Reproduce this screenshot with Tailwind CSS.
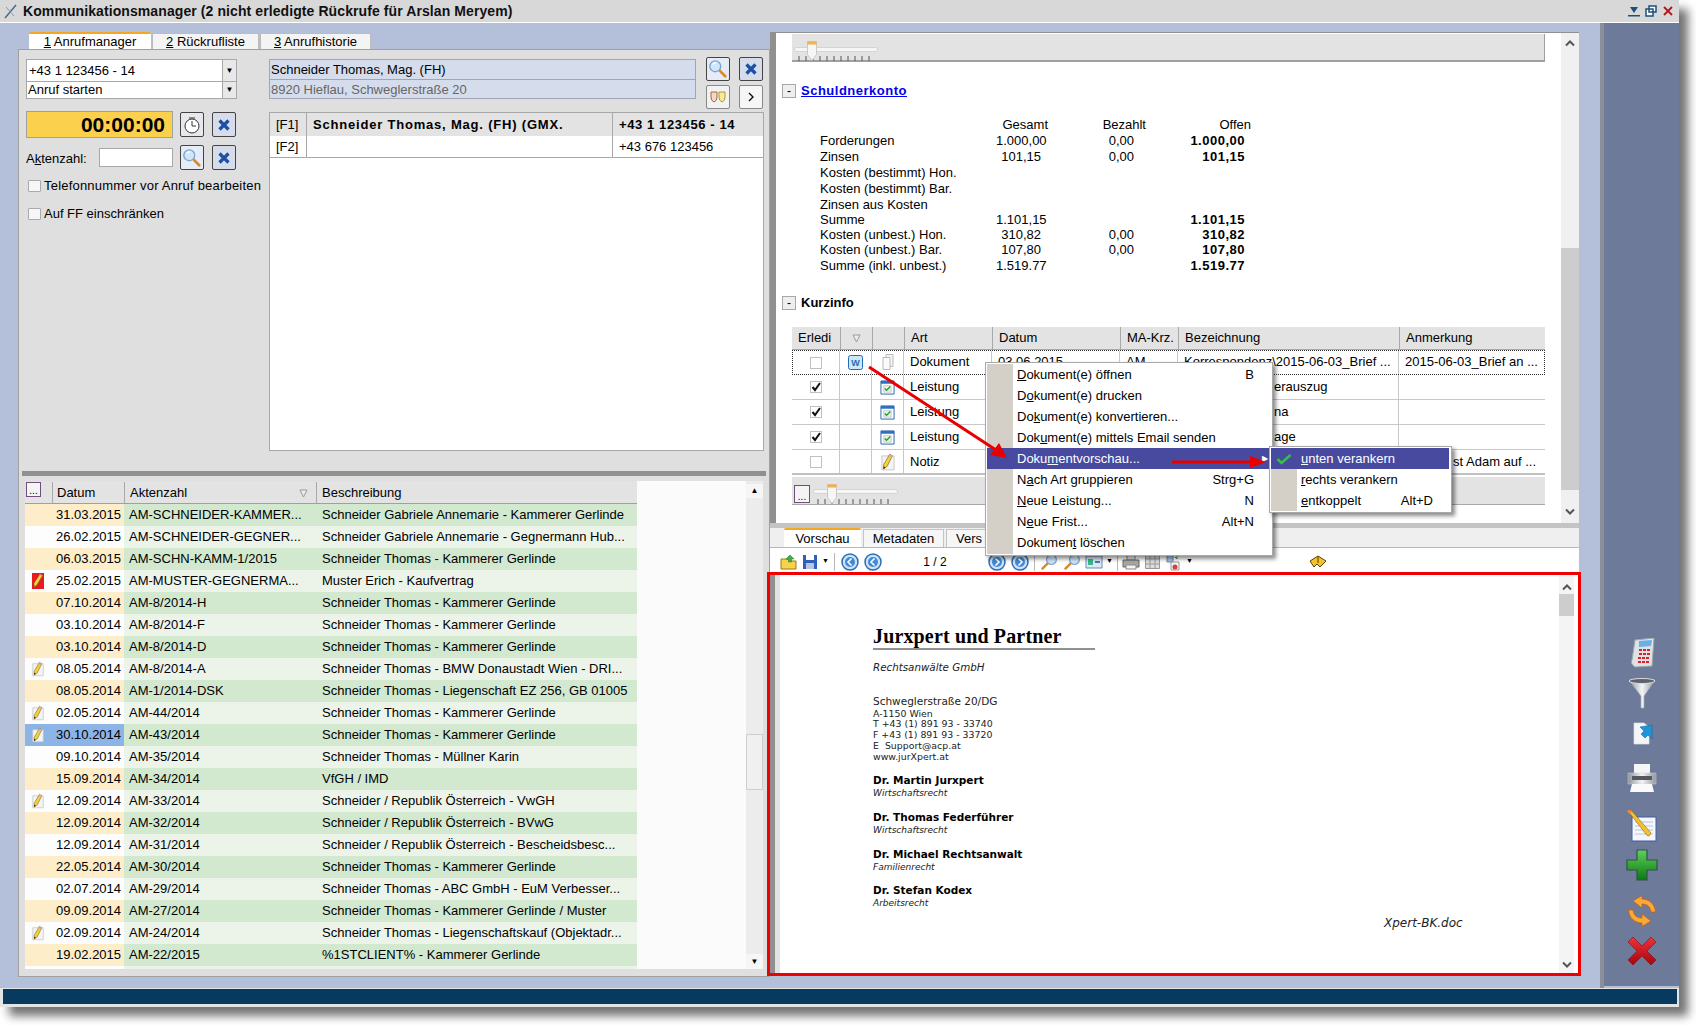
<!doctype html>
<html lang="de">
  <head>
    <meta charset="UTF-8" />
    <title>Kommunikationsmanager</title>
    <script src="https://cdn.jsdelivr.net/npm/@tailwindcss/browser@4"></script>
  </head>
  <body class="h-[1025px] bg-white overflow-hidden font-['Liberation_Sans',sans-serif] text-[13px] text-black select-none">
    <svg class="absolute h-0 w-0">
      <defs>
        <linearGradient id="gGreen" x1="0" y1="0" x2="0" y2="1"><stop offset="0" stop-color="#5fd05a" /><stop offset="1" stop-color="#0a7a12" /></linearGradient>
        <linearGradient id="gRed" x1="0" y1="0" x2="0" y2="1"><stop offset="0" stop-color="#f0323a" /><stop offset="1" stop-color="#a80410" /></linearGradient>
        <linearGradient id="gSilver" x1="0" y1="0" x2="1" y2="0"><stop offset="0" stop-color="#8d939c" /><stop offset=".5" stop-color="#f4f5f6" /><stop offset="1" stop-color="#9097a0" /></linearGradient>
        <symbol id="pencil" viewBox="0 0 16 20">
          <path d="M1 3h14v16H1z" fill="#f4f4f4" stroke="#c4c4c4" />
          <path d="M10 1l3 2-6 12-4 3 0-5z" fill="#f5d33c" stroke="#6b5a10" stroke-width=".7" />
          <path d="M10 1l3 2-1 2-3-2z" fill="#f29ab0" />
          <path d="M3 18l0-3 2 1z" fill="#111" />
        </symbol>
        <symbol id="lens" viewBox="0 0 22 22">
          <path d="M12 12l7 7" stroke="#d9892a" stroke-width="3" stroke-linecap="round" />
          <circle cx="8" cy="8" r="6" fill="#cfe6fb" stroke="#7ea6cf" stroke-width="1.5" />
          <path d="M5 6q2-2 4-1.500" stroke="#fff" stroke-width="1.500" fill="none" />
        </symbol>
        <symbol id="xblue" viewBox="0 0 14 14">
          <path d="M2.500 2.500l9 9M11.500 2.500l-9 9" stroke="#1b4fa8" stroke-width="3.200" />
        </symbol>
        <symbol id="task" viewBox="0 0 16 16">
          <path d="M1 1h14v14H1z" fill="#fff" stroke="#2a5fa8" />
          <path d="M1 1h14v3H1z" fill="#2f6fc0" />
          <path d="M4 6h8v7H4z" fill="#e6f3e2" stroke="#9ab" stroke-width=".5" />
          <path d="M5 9l2 2 4-4" fill="none" stroke="#22a028" stroke-width="1.400" />
        </symbol>
        <symbol id="round" viewBox="0 0 18 18">
          <circle cx="9" cy="9" r="8" fill="#cfe2f6" stroke="#2c6db5" stroke-width="1.500" />
          <circle cx="9" cy="9" r="5" fill="#3f8bd8" />
          <path d="M10.500 5.500L7 9l3.500 3.500" fill="none" stroke="#fff" stroke-width="1.600" />
        </symbol>
        <symbol id="roundnext" viewBox="0 0 18 18">
          <circle cx="9" cy="9" r="8" fill="#cfe2f6" stroke="#2c6db5" stroke-width="1.500" />
          <circle cx="9" cy="9" r="5" fill="#3f8bd8" />
          <path d="M7.500 5.500L11 9l-3.500 3.500" fill="none" stroke="#fff" stroke-width="1.600" />
        </symbol>
        <symbol id="ticks" viewBox="0 0 85 5">
          <path d="M5 0v5M12 0v5M19 0v5M26 0v5M33 0v5M40 0v5M47 0v5M54 0v5M61 0v5M68 0v5M75 0v5" stroke="#555" />
        </symbol>
      </defs>
    </svg>

    <div class="relative flex h-[1007px] w-[1679px] flex-col bg-[#e4e4e4] shadow-[9px_9px_9px_rgba(0,0,0,0.55)]">
      <!-- Titelleiste -->
      <div class="flex h-[23px] shrink-0 items-center border-b border-white bg-[#d8d8d8]">
        <svg class="mx-[3px] h-[16px] w-[16px]" viewBox="0 0 16 16"><path d="M2 15L13 2" stroke="#4a6a90" stroke-width="1.500" /><path d="M3 4l8 9" stroke="#8a9ab0" /></svg>
        <span class="ml-[1px] text-[14px] leading-none font-bold tracking-[0.09px] text-[#111]">Kommunikationsmanager (2 nicht erledigte Rückrufe für Arslan Meryem)</span>
        <div class="ml-auto mr-[5px] flex items-center gap-[5px]">
          <svg class="h-[12px] w-[12px]" viewBox="0 0 12 12"><path d="M2 2h8L6 8z" fill="#1c4f7c" /><path d="M0 10h12v1.500H0z" fill="#1c4f7c" /></svg>
          <svg class="h-[12px] w-[12px]" viewBox="0 0 12 12"><path d="M4 1h7v6H4zM1 4h7v7H1z" fill="#fff" stroke="#1c4f7c" stroke-width="1.500" /></svg>
          <svg class="h-[12px] w-[12px]" viewBox="0 0 12 12"><path d="M2 2l8 8M10 2l-8 8" stroke="#b01818" stroke-width="1.800" /></svg>
        </div>
      </div>

      <!-- Hauptbereich -->
      <div class="flex h-[965px] shrink-0 bg-[#b4c0da] pl-[18px]">
        <!-- linke Seite -->
        <div class="flex w-[752px] shrink-0 flex-col pt-[9px] pb-[11px]">
          <div class="flex h-[17px] shrink-0 items-end pl-[11px] leading-[16px]">
            <div class="h-[17px] w-[122px] rounded-t-[2px] border-t-2 border-[#f5a623] bg-white text-center"><u>1</u> Anrufmanager</div>
            <div class="ml-[1px] h-[16px] w-[107px] rounded-t-[2px] border border-b-0 border-[#bcbcbc] bg-[#f4f4f4] text-center"><u>2</u> Rückrufliste</div>
            <div class="ml-[1px] h-[16px] w-[111px] rounded-t-[2px] border border-b-0 border-[#bcbcbc] bg-[#f4f4f4] text-center"><u>3</u> Anrufhistorie</div>
          </div>
          <div class="flex min-h-0 flex-1 flex-col border border-[#a0a0a0] bg-[#dfdfdf]">
            <!-- oben -->
            <div class="flex h-[421px] shrink-0">
              <div class="w-[250px] shrink-0 pl-[7px] pt-[9px]">
                <div class="w-[211px] border border-[#a8a8a8] bg-white">
                  <div class="flex h-[22px] items-center border-b border-[#a8a8a8] pl-[2px]">+43 1 123456 - 14<span class="ml-auto flex h-full w-[14px] items-center justify-center border-l border-[#a8a8a8] bg-[#e8e8e8] text-[8px]">▼</span></div>
                  <div class="flex h-[16px] items-center pl-[1px]">Anruf starten<span class="ml-auto flex h-full w-[14px] items-center justify-center border-l border-[#a8a8a8] bg-[#e8e8e8] text-[8px]">▼</span></div>
                </div>
                <div class="mt-[12px] flex items-center">
                  <div class="flex h-[27px] w-[147px] items-center justify-end border border-[#a0a0a0] bg-[#fbd04c] pr-[7px] text-[21px] font-bold">00:00:00</div>
                  <div class="ml-[7px] flex h-[25px] w-[24px] items-center justify-center rounded-[2px] border border-[#444] bg-[#e6e8ee]">
                    <svg class="h-[18px] w-[18px]" viewBox="0 0 18 18"><circle cx="9" cy="10" r="7" fill="#fff" stroke="#333" /><path d="M9 5v5l4 0" stroke="#333" fill="none" /><path d="M6 2h6" stroke="#333" /></svg>
                  </div>
                  <div class="ml-[8px] flex h-[25px] w-[24px] items-center justify-center rounded-[2px] border border-[#444] bg-[#d6dcea]"><svg class="h-[14px] w-[14px]"><use href="#xblue" /></svg></div>
                </div>
                <div class="mt-[7px] flex items-center">
                  <span class="w-[73px] pt-[2px]">A<u>k</u>tenzahl:</span>
                  <div class="h-[19px] w-[74px] border border-[#a8a8a8] bg-white"></div>
                  <div class="ml-[7px] flex h-[25px] w-[24px] items-center justify-center rounded-[2px] border border-[#444] bg-[#e6ecf6]"><svg class="h-[20px] w-[20px]"><use href="#lens" /></svg></div>
                  <div class="ml-[8px] flex h-[25px] w-[24px] items-center justify-center rounded-[2px] border border-[#444] bg-[#d6dcea]"><svg class="h-[14px] w-[14px]"><use href="#xblue" /></svg></div>
                </div>
                <div class="mt-[9px] flex h-[14px] items-center pl-[2px] tracking-[0.2px] whitespace-nowrap"><span class="mr-[3px] h-[12px] w-[13px] rounded-[1px] border border-[#aaa] bg-[#f6f6f6]"></span>Telefonnummer vor Anruf bearbeiten</div>
                <div class="mt-[14px] flex h-[14px] items-center pl-[2px]"><span class="mr-[3px] h-[12px] w-[13px] rounded-[1px] border border-[#aaa] bg-[#f6f6f6]"></span>Auf FF einschränken</div>
              </div>
              <div class="w-[495px] shrink-0 pt-[6px]">
                <div class="flex h-[53px]">
                  <div class="mt-[3px] h-[40px] w-[427px] border border-[#a0a6b8] bg-[#d5dded]">
                    <div class="h-[20px] border-b border-[#a0a6b8] pl-[1px] leading-[19px]">Schneider Thomas, Mag. (FH)</div>
                    <div class="pl-[1px] leading-[19px] text-[#666]">8920 Hieflau, Schweglerstraße 20</div>
                  </div>
                  <div class="ml-[10px] flex w-[57px] flex-wrap content-start gap-x-[9px] gap-y-[4px] pt-[1px]">
                    <div class="flex h-[24px] w-[24px] items-center justify-center rounded-[2px] border border-[#444] bg-[#e6ecf6]"><svg class="h-[20px] w-[20px]"><use href="#lens" /></svg></div>
                    <div class="flex h-[24px] w-[24px] items-center justify-center rounded-[2px] border border-[#444] bg-[#d6dcea]"><svg class="h-[14px] w-[14px]"><use href="#xblue" /></svg></div>
                    <div class="flex h-[24px] w-[24px] items-center justify-center rounded-[2px] border border-[#888] bg-[#f2f2f2]">
                      <svg class="h-[14px] w-[16px]" viewBox="0 0 16 14"><path d="M1 2h6v5q0 4-3 5-3-1-3-5z" fill="#f4d9c0" stroke="#a8644a" /><path d="M9 2h6v5q0 4-3 5-3-1-3-5z" fill="#f6e9a0" stroke="#b09a30" /></svg>
                    </div>
                    <div class="flex h-[24px] w-[24px] items-center justify-center rounded-[2px] border border-[#888] bg-[#f6f6f6]">
                      <svg class="h-[10px] w-[8px]" viewBox="0 0 8 10"><path d="M2 1l4 4-4 4" fill="none" stroke="#111" stroke-width="1.400" /></svg>
                    </div>
                  </div>
                </div>
                <div class="mt-[3px] h-[339px] w-[495px] border border-[#a8a8a8] bg-white">
                  <div class="flex h-[23px] items-center bg-[#e3e3e3] font-bold">
                    <div class="h-full w-[37px] border-r border-[#a8a8a8] pl-[6px] leading-[23px] font-normal">[F1]</div>
                    <div class="w-[306px] overflow-hidden border-r border-[#a8a8a8] pl-[6px] leading-[23px] tracking-[0.8px] whitespace-nowrap">Schneider Thomas, Mag. (FH) (GMX.</div>
                    <div class="pl-[6px] leading-[23px] tracking-[0.6px]">+43 1 123456 - 14</div>
                  </div>
                  <div class="flex h-[22px] items-center border-b border-[#a8a8a8]">
                    <div class="h-full w-[37px] border-r border-[#a8a8a8] pl-[6px] leading-[21px]">[F2]</div>
                    <div class="h-full w-[306px] border-r border-[#a8a8a8]"></div>
                    <div class="pl-[6px] leading-[21px]">+43 676 123456</div>
                  </div>
                </div>
              </div>
            </div>

            <!-- Splitter -->
            <div class="mx-[3px] h-[5px] shrink-0 bg-[#909090]"></div>

            <!-- Liste -->
            <div class="flex min-h-0 flex-1 pt-[5px] pl-[6px] pb-[7px]">
              <div class="w-[721px] shrink-0 overflow-hidden bg-[#fbfbfb] leading-[22px] whitespace-nowrap">
                <div class="flex h-[23px] w-[612px] border-b border-[#a0a0a0] bg-[#e3e3e3] pt-[1px]">
                  <div class="flex w-[27px] items-start pl-[1px]"><span class="flex h-[15px] w-[15px] items-end justify-center border border-[#70507a] bg-[#f4f4f4] text-[10px] leading-[10px]">...</span></div>
                  <div class="w-[72px] border-l border-[#a8a8a8] pl-[4px]">Datum</div>
                  <div class="flex w-[192px] border-l border-[#a8a8a8] pl-[5px]">Aktenzahl<svg class="mt-[7px] ml-auto mr-[8px] h-[9px] w-[9px]" viewBox="0 0 9 9"><path d="M1 1h7L4.500 8z" fill="#eee" stroke="#999" /></svg></div>
                  <div class="border-l border-[#a8a8a8] pl-[5px]">Beschreibung</div>
                </div>
                <div class="flex h-[22px]"><div class="w-[99px] bg-[#fdedc9] pl-[31px]">31.03.2015</div><div class="w-[192px] bg-[#d2e9d0] pl-[5px]">AM-SCHNEIDER-KAMMER...</div><div class="w-[321px] bg-[#d2e9d0] pl-[6px]">Schneider Gabriele Annemarie - Kammerer Gerlinde</div></div>
                <div class="flex h-[22px]"><div class="w-[99px] bg-[#fdfdfd] pl-[31px]">26.02.2015</div><div class="w-[192px] bg-[#ecf4ea] pl-[5px]">AM-SCHNEIDER-GEGNER...</div><div class="w-[321px] bg-[#ecf4ea] pl-[6px]">Schneider Gabriele Annemarie - Gegnermann Hub...</div></div>
                <div class="flex h-[22px]"><div class="w-[99px] bg-[#fdedc9] pl-[31px]">06.03.2015</div><div class="w-[192px] bg-[#d2e9d0] pl-[5px]">AM-SCHN-KAMM-1/2015</div><div class="w-[321px] bg-[#d2e9d0] pl-[6px]">Schneider Thomas - Kammerer Gerlinde</div></div>
                <div class="flex h-[22px]"><div class="flex w-[99px] items-center bg-[#fdfdfd] pl-[7px]"><span class="flex h-[16px] w-[12px] items-center justify-center bg-[#e81c1c]"><svg class="h-[16px] w-[12px]" viewBox="0 0 12 16"><path d="M8 1l2.500 1.500L5 12l-3 2 0-4z" fill="#f5d33c" stroke="#6b5a10" stroke-width=".6" /><path d="M8 1l2.500 1.500-.8 1.500-2.500-1.500z" fill="#f29ab0" /></svg></span><span class="ml-[12px]">25.02.2015</span></div><div class="w-[192px] bg-[#ecf4ea] pl-[5px]">AM-MUSTER-GEGNERMA...</div><div class="w-[321px] bg-[#ecf4ea] pl-[6px]">Muster Erich - Kaufvertrag</div></div>
                <div class="flex h-[22px]"><div class="w-[99px] bg-[#fdedc9] pl-[31px]">07.10.2014</div><div class="w-[192px] bg-[#d2e9d0] pl-[5px]">AM-8/2014-H</div><div class="w-[321px] bg-[#d2e9d0] pl-[6px]">Schneider Thomas - Kammerer Gerlinde</div></div>
                <div class="flex h-[22px]"><div class="w-[99px] bg-[#fdfdfd] pl-[31px]">03.10.2014</div><div class="w-[192px] bg-[#ecf4ea] pl-[5px]">AM-8/2014-F</div><div class="w-[321px] bg-[#ecf4ea] pl-[6px]">Schneider Thomas - Kammerer Gerlinde</div></div>
                <div class="flex h-[22px]"><div class="w-[99px] bg-[#fdedc9] pl-[31px]">03.10.2014</div><div class="w-[192px] bg-[#d2e9d0] pl-[5px]">AM-8/2014-D</div><div class="w-[321px] bg-[#d2e9d0] pl-[6px]">Schneider Thomas - Kammerer Gerlinde</div></div>
                <div class="flex h-[22px]"><div class="flex w-[99px] items-center bg-[#fdfdfd] pl-[7px]"><svg class="h-[16px] w-[12px]"><use href="#pencil" /></svg><span class="ml-[12px]">08.05.2014</span></div><div class="w-[192px] bg-[#ecf4ea] pl-[5px]">AM-8/2014-A</div><div class="w-[321px] bg-[#ecf4ea] pl-[6px]">Schneider Thomas - BMW Donaustadt Wien - DRI...</div></div>
                <div class="flex h-[22px]"><div class="w-[99px] bg-[#fdedc9] pl-[31px]">08.05.2014</div><div class="w-[192px] bg-[#d2e9d0] pl-[5px]">AM-1/2014-DSK</div><div class="w-[321px] bg-[#d2e9d0] pl-[6px]">Schneider Thomas - Liegenschaft EZ 256, GB 01005</div></div>
                <div class="flex h-[22px]"><div class="flex w-[99px] items-center bg-[#fdfdfd] pl-[7px]"><svg class="h-[16px] w-[12px]"><use href="#pencil" /></svg><span class="ml-[12px]">02.05.2014</span></div><div class="w-[192px] bg-[#ecf4ea] pl-[5px]">AM-44/2014</div><div class="w-[321px] bg-[#ecf4ea] pl-[6px]">Schneider Thomas - Kammerer Gerlinde</div></div>
                <div class="flex h-[22px]"><div class="flex w-[99px] items-center bg-[#8db4e6] pl-[7px]"><svg class="h-[16px] w-[12px]"><use href="#pencil" /></svg><span class="ml-[12px]">30.10.2014</span></div><div class="w-[192px] bg-[#d2e9d0] pl-[5px]">AM-43/2014</div><div class="w-[321px] bg-[#d2e9d0] pl-[6px]">Schneider Thomas - Kammerer Gerlinde</div></div>
                <div class="flex h-[22px]"><div class="w-[99px] bg-[#fdfdfd] pl-[31px]">09.10.2014</div><div class="w-[192px] bg-[#ecf4ea] pl-[5px]">AM-35/2014</div><div class="w-[321px] bg-[#ecf4ea] pl-[6px]">Schneider Thomas - Müllner Karin</div></div>
                <div class="flex h-[22px]"><div class="w-[99px] bg-[#fdedc9] pl-[31px]">15.09.2014</div><div class="w-[192px] bg-[#d2e9d0] pl-[5px]">AM-34/2014</div><div class="w-[321px] bg-[#d2e9d0] pl-[6px]">VfGH / IMD</div></div>
                <div class="flex h-[22px]"><div class="flex w-[99px] items-center bg-[#fdfdfd] pl-[7px]"><svg class="h-[16px] w-[12px]"><use href="#pencil" /></svg><span class="ml-[12px]">12.09.2014</span></div><div class="w-[192px] bg-[#ecf4ea] pl-[5px]">AM-33/2014</div><div class="w-[321px] bg-[#ecf4ea] pl-[6px]">Schneider / Republik Österreich - VwGH</div></div>
                <div class="flex h-[22px]"><div class="w-[99px] bg-[#fdedc9] pl-[31px]">12.09.2014</div><div class="w-[192px] bg-[#d2e9d0] pl-[5px]">AM-32/2014</div><div class="w-[321px] bg-[#d2e9d0] pl-[6px]">Schneider / Republik Österreich - BVwG</div></div>
                <div class="flex h-[22px]"><div class="w-[99px] bg-[#fdfdfd] pl-[31px]">12.09.2014</div><div class="w-[192px] bg-[#ecf4ea] pl-[5px]">AM-31/2014</div><div class="w-[321px] bg-[#ecf4ea] pl-[6px]">Schneider / Republik Österreich - Bescheidsbesc...</div></div>
                <div class="flex h-[22px]"><div class="w-[99px] bg-[#fdedc9] pl-[31px]">22.05.2014</div><div class="w-[192px] bg-[#d2e9d0] pl-[5px]">AM-30/2014</div><div class="w-[321px] bg-[#d2e9d0] pl-[6px]">Schneider Thomas - Kammerer Gerlinde</div></div>
                <div class="flex h-[22px]"><div class="w-[99px] bg-[#fdfdfd] pl-[31px]">02.07.2014</div><div class="w-[192px] bg-[#ecf4ea] pl-[5px]">AM-29/2014</div><div class="w-[321px] bg-[#ecf4ea] pl-[6px]">Schneider Thomas - ABC GmbH -  EuM Verbesser...</div></div>
                <div class="flex h-[22px]"><div class="w-[99px] bg-[#fdedc9] pl-[31px]">09.09.2014</div><div class="w-[192px] bg-[#d2e9d0] pl-[5px]">AM-27/2014</div><div class="w-[321px] bg-[#d2e9d0] pl-[6px]">Schneider Thomas - Kammerer Gerlinde / Muster</div></div>
                <div class="flex h-[22px]"><div class="flex w-[99px] items-center bg-[#fdfdfd] pl-[7px]"><svg class="h-[16px] w-[12px]"><use href="#pencil" /></svg><span class="ml-[12px]">02.09.2014</span></div><div class="w-[192px] bg-[#ecf4ea] pl-[5px]">AM-24/2014</div><div class="w-[321px] bg-[#ecf4ea] pl-[6px]">Schneider Thomas - Liegenschaftskauf (Objektadr...</div></div>
                <div class="flex h-[22px]"><div class="w-[99px] bg-[#fdedc9] pl-[31px]">19.02.2015</div><div class="w-[192px] bg-[#d2e9d0] pl-[5px]">AM-22/2015</div><div class="w-[321px] bg-[#d2e9d0] pl-[6px]">%1STCLIENT% - Kammerer Gerlinde</div></div>
                <div class="flex h-[22px]"><div class="w-[99px] bg-[#fdfdfd]"></div><div class="w-[513px] bg-[#ecf4ea]"></div></div>
              </div>
              <!-- Scrollbar Liste -->
              <div class="flex w-[17px] shrink-0 flex-col bg-[#ececec]">
                <div class="mt-[3px] flex h-[14px] items-center justify-center bg-[#f6f6f6] text-[8px] leading-none">▲</div>
                <div class="mt-[236px] h-[56px] border border-[#cfcfcf] bg-[#f0f0f0]"></div>
                <div class="mt-auto flex h-[15px] items-center justify-center bg-[#f6f6f6] text-[8px] leading-none">▼</div>
              </div>
            </div>
          </div>
        </div>

        <!-- rechte Seite -->
        <div class="flex w-[811px] shrink-0 flex-col pt-[9px] pb-[12px]">
          <!-- Detailbereich -->
          <div class="flex h-[491px] shrink-0 border-t border-l-[6px] border-[#909090] bg-white mr-[2px]">
            <div class="w-[785px] shrink-0 pl-[6px]">
              <div class="mt-[1px] ml-[10px] h-[28px] w-[753px] border-r border-b-2 border-[#a0a0a0] bg-[#e3e3e3] pl-[2px] pt-[7px]">
                <div class="relative h-[20px] w-[84px]">
                  <div class="absolute top-[6px] left-0 h-[5px] w-[84px] rounded-[2px] border border-[#d4d4d4] bg-[#f6f6f6]"></div>
                  <svg class="absolute top-[15px] left-0 h-[5px] w-[85px]"><use href="#ticks" /></svg>
                  <svg class="absolute top-0 left-[13px] h-[20px] w-[10px]" viewBox="0 0 10 20"><path d="M.5.5h9v13l-4.500 6-4.500-6z" fill="#f6f6f6" stroke="#c8c8c8" /><path d="M.5.5h9v3h-9z" fill="#f5b04a" /></svg>
                </div>
              </div>

              <div class="mt-[22px] flex h-[14px] items-center">
                <span class="flex h-[14px] w-[14px] items-center justify-center border border-[#a8a8a8] bg-[#eee] text-[12px] leading-none">-</span>
                <a class="ml-[5px] font-bold tracking-[0.5px] text-[#0000ee] underline">Schuldnerkonto</a>
              </div>

              <div class="mt-[19px] ml-[38px] grid grid-cols-[176px_45px_93px_111px] leading-[16px] whitespace-nowrap">
                <div></div><div class="text-right -mr-[7px]">Gesamt</div><div class="text-right -mr-[12px]">Bezahlt</div><div class="text-right -mr-[6px]">Offen</div>
                <div>Forderungen</div><div class="text-right">1.000,00</div><div class="text-right">0,00</div><div class="text-right font-bold tracking-[0.5px]">1.000,00</div>
                <div>Zinsen</div><div class="text-right">101,15</div><div class="text-right">0,00</div><div class="text-right font-bold tracking-[0.5px]">101,15</div>
                <div>Kosten (bestimmt) Hon.</div><div></div><div></div><div></div>
                <div>Kosten (bestimmt) Bar.</div><div></div><div></div><div></div>
                <div class="leading-[15px]">Zinsen aus Kosten</div><div></div><div></div><div></div>
                <div class="leading-[15px]">Summe</div><div class="text-right leading-[15px]">1.101,15</div><div></div><div class="text-right leading-[15px] font-bold tracking-[0.5px]">1.101,15</div>
                <div class="leading-[15px]">Kosten (unbest.) Hon.</div><div class="text-right leading-[15px]">310,82</div><div class="text-right leading-[15px]">0,00</div><div class="text-right leading-[15px] font-bold tracking-[0.5px]">310,82</div>
                <div>Kosten (unbest.) Bar.</div><div class="text-right">107,80</div><div class="text-right">0,00</div><div class="text-right font-bold tracking-[0.5px]">107,80</div>
                <div>Summe (inkl. unbest.)</div><div class="text-right">1.519.77</div><div></div><div class="text-right font-bold tracking-[0.5px]">1.519.77</div>
              </div>

              <div class="mt-[22px] flex h-[14px] items-center">
                <span class="flex h-[14px] w-[14px] items-center justify-center border border-[#a8a8a8] bg-[#eee] text-[12px] leading-none">-</span>
                <span class="ml-[5px] font-bold">Kurzinfo</span>
              </div>

              <!-- Tabelle Kurzinfo -->
              <div class="mt-[17px] ml-[10px] w-[753px] whitespace-nowrap">
                <div class="flex h-[23px] items-center border-b border-[#a8a8a8] bg-[#e3e3e3]">
                  <div class="w-[48px] pl-[6px]">Erledi</div>
                  <div class="flex h-full w-[32px] items-center justify-center border-l border-[#a8a8a8]"><svg class="h-[9px] w-[9px]" viewBox="0 0 9 9"><path d="M1 1h7L4.500 8z" fill="#eee" stroke="#999" /></svg></div>
                  <div class="h-full w-[32px] border-l border-[#a8a8a8]"></div>
                  <div class="w-[88px] border-l border-[#a8a8a8] pl-[6px] leading-[22px]">Art</div>
                  <div class="w-[128px] border-l border-[#a8a8a8] pl-[6px] leading-[22px]">Datum</div>
                  <div class="w-[58px] border-l border-[#a8a8a8] pl-[6px] leading-[22px]">MA-Krz.</div>
                  <div class="w-[221px] border-l border-[#a8a8a8] pl-[6px] leading-[22px]">Bezeichnung</div>
                  <div class="border-l border-[#a8a8a8] pl-[6px] leading-[22px]">Anmerkung</div>
                </div>
                <div class="flex h-[25px] items-center border border-dotted border-[#333] leading-[21px]">
                  <div class="flex h-full w-[47px] items-center justify-center border-r border-[#c8c8c8]"><span class="h-[12px] w-[12px] border border-[#c0c0c0] bg-white"></span></div>
                  <div class="flex h-full w-[32px] items-center justify-center border-r border-[#c8c8c8]">
                    <svg class="h-[15px] w-[15px]" viewBox="0 0 15 15"><rect x=".5" y=".5" width="14" height="14" rx="2" fill="#cfe6f8" stroke="#1e6fb0" /><text x="7.500" y="11" text-anchor="middle" font-size="9" font-weight="700" fill="#1e6fb0" font-family="Liberation Sans">W</text></svg>
                  </div>
                  <div class="flex h-full w-[32px] items-center justify-center border-r border-[#c8c8c8]">
                    <svg class="h-[17px] w-[12px]" viewBox="0 0 12 17"><path d="M4 .5h7v12H4z" fill="#f4f4f4" stroke="#bbb" /><path d="M1 3.500h7v12H1z" fill="#fbfbfb" stroke="#bbb" /></svg>
                  </div>
                  <div class="h-full w-[88px] border-r border-[#c8c8c8] pl-[6px]">Dokument</div>
                  <div class="h-full w-[128px] border-r border-[#c8c8c8] pl-[6px]">03.06.2015</div>
                  <div class="h-full w-[58px] border-r border-[#c8c8c8] pl-[6px]">AM</div>
                  <div class="h-full w-[221px] border-r border-[#c8c8c8] pl-[6px]">Korrespondenz\2015-06-03_Brief ...</div>
                  <div class="h-full pl-[6px]">2015-06-03_Brief an ...</div>
                </div>
                <div class="flex h-[25px] items-center border-b border-[#c8c8c8] leading-[24px]">
                  <div class="flex h-full w-[48px] items-center justify-center border-r border-[#c8c8c8]"><span class="flex h-[12px] w-[12px] items-center justify-center border border-[#c0c0c0] bg-white"><svg class="h-[10px] w-[10px]" viewBox="0 0 10 10"><path d="M1.500 5l2.500 3 5-7" fill="none" stroke="#111" stroke-width="2" /></svg></span></div>
                  <div class="h-full w-[32px] border-r border-[#c8c8c8]"></div>
                  <div class="flex h-full w-[32px] items-center justify-center border-r border-[#c8c8c8]"><svg class="h-[15px] w-[15px]"><use href="#task" /></svg></div>
                  <div class="w-[88px] border-r border-[#c8c8c8] pl-[6px]">Leistung</div>
                  <div class="h-full w-[128px] border-r border-[#c8c8c8]"></div>
                  <div class="h-full w-[58px] border-r border-[#c8c8c8]"></div>
                  <div class="h-full w-[221px] border-r border-[#c8c8c8] pl-[96px]">erauszug</div>
                </div>
                <div class="flex h-[25px] items-center border-b border-[#c8c8c8] leading-[24px]">
                  <div class="flex h-full w-[48px] items-center justify-center border-r border-[#c8c8c8]"><span class="flex h-[12px] w-[12px] items-center justify-center border border-[#c0c0c0] bg-white"><svg class="h-[10px] w-[10px]" viewBox="0 0 10 10"><path d="M1.500 5l2.500 3 5-7" fill="none" stroke="#111" stroke-width="2" /></svg></span></div>
                  <div class="h-full w-[32px] border-r border-[#c8c8c8]"></div>
                  <div class="flex h-full w-[32px] items-center justify-center border-r border-[#c8c8c8]"><svg class="h-[15px] w-[15px]"><use href="#task" /></svg></div>
                  <div class="w-[88px] border-r border-[#c8c8c8] pl-[6px]">Leistung</div>
                  <div class="h-full w-[128px] border-r border-[#c8c8c8]"></div>
                  <div class="h-full w-[58px] border-r border-[#c8c8c8]"></div>
                  <div class="h-full w-[221px] border-r border-[#c8c8c8] pl-[96px]">na</div>
                </div>
                <div class="flex h-[25px] items-center border-b border-[#c8c8c8] leading-[24px]">
                  <div class="flex h-full w-[48px] items-center justify-center border-r border-[#c8c8c8]"><span class="flex h-[12px] w-[12px] items-center justify-center border border-[#c0c0c0] bg-white"><svg class="h-[10px] w-[10px]" viewBox="0 0 10 10"><path d="M1.500 5l2.500 3 5-7" fill="none" stroke="#111" stroke-width="2" /></svg></span></div>
                  <div class="h-full w-[32px] border-r border-[#c8c8c8]"></div>
                  <div class="flex h-full w-[32px] items-center justify-center border-r border-[#c8c8c8]"><svg class="h-[15px] w-[15px]"><use href="#task" /></svg></div>
                  <div class="w-[88px] border-r border-[#c8c8c8] pl-[6px]">Leistung</div>
                  <div class="h-full w-[128px] border-r border-[#c8c8c8]"></div>
                  <div class="h-full w-[58px] border-r border-[#c8c8c8]"></div>
                  <div class="h-full w-[221px] border-r border-[#c8c8c8] pl-[96px]">age</div>
                </div>
                <div class="flex h-[25px] items-center border-b-2 border-[#c0c0c0] leading-[24px]">
                  <div class="flex h-full w-[48px] items-center justify-center border-r border-[#c8c8c8]"><span class="h-[12px] w-[12px] border border-[#c0c0c0] bg-white"></span></div>
                  <div class="h-full w-[32px] border-r border-[#c8c8c8]"></div>
                  <div class="flex h-full w-[32px] items-center justify-center border-r border-[#c8c8c8]"><svg class="h-[18px] w-[14px]"><use href="#pencil" /></svg></div>
                  <div class="w-[88px] border-r border-[#c8c8c8] pl-[6px]">Notiz</div>
                  <div class="h-full w-[128px] border-r border-[#c8c8c8]"></div>
                  <div class="h-full w-[58px] border-r border-[#c8c8c8]"></div>
                  <div class="h-full w-[221px] border-r border-[#c8c8c8]"></div>
                  <div class="pl-[54px]">st Adam auf ...</div>
                </div>
                <div class="mt-[2px] flex h-[28px] items-start border-b border-[#a8a8a8] bg-[#e3e3e3] pl-[2px] pt-[8px]">
                  <span class="flex h-[18px] w-[16px] items-end justify-center border border-[#70507a] bg-[#f4f4f4] text-[10px] leading-[11px]">...</span>
                  <div class="relative -mt-[1px] ml-[3px] h-[20px] w-[85px]">
                    <div class="absolute top-[5px] left-0 h-[5px] w-[85px] rounded-[2px] border border-[#d4d4d4] bg-[#f6f6f6]"></div>
                    <svg class="absolute top-[15px] left-0 h-[5px] w-[85px]"><use href="#ticks" /></svg>
                    <svg class="absolute top-0 left-[14px] h-[20px] w-[10px]" viewBox="0 0 10 20"><path d="M.5.5h9v13l-4.500 6-4.500-6z" fill="#f6f6f6" stroke="#c8c8c8" /><path d="M.5.5h9v3h-9z" fill="#f5b04a" /></svg>
                  </div>
                </div>
              </div>
            </div>
            <!-- Scrollbar Detail -->
            <div class="flex w-[18px] shrink-0 flex-col items-center bg-[#f0f0f0]">
              <svg class="mt-[6px] h-[8px] w-[10px]" viewBox="0 0 10 8"><path d="M1 6.500l4-4 4 4" fill="none" stroke="#555" stroke-width="2" /></svg>
              <div class="mt-[201px] h-[242px] w-full bg-[#cdcdcd]"></div>
              <svg class="mt-[18px] h-[8px] w-[10px]" viewBox="0 0 10 8"><path d="M1 1.500l4 4 4-4" fill="none" stroke="#555" stroke-width="2" /></svg>
            </div>
          </div>

          <!-- Vorschau -->
          <div class="h-[5px] shrink-0 bg-[#c4c4c4] mr-[2px]"></div>
          <div class="flex h-[20px] shrink-0 items-end border-b border-[#b8b8b8] bg-[#efefef] pl-[14px] mr-[2px] leading-[17px]">
            <div class="h-[19px] w-[77px] rounded-t-[2px] border-t-2 border-[#f5a623] bg-white text-center">Vorschau</div>
            <div class="ml-[2px] h-[18px] w-[81px] border-x border-t border-[#c4c4c4] bg-[#f6f6f6] text-center">Metadaten</div>
            <div class="ml-[2px] h-[18px] w-[50px] border-x border-t border-[#c4c4c4] bg-[#f6f6f6] pl-[9px]">Vers</div>
          </div>
          <div class="flex h-[24px] shrink-0 items-center bg-white pl-[10px] pt-[3px] mr-[2px]">
            <svg class="h-[18px] w-[18px]" viewBox="0 0 18 18"><path d="M1 6h6l2 2h7v8H1z" fill="#f7d24a" stroke="#a07810" /><path d="M6 6l4-4 4 4h-2.500v3h-3V6z" fill="#3cb043" stroke="#1e7a24" stroke-width=".5" /></svg>
            <svg class="ml-[4px] h-[16px] w-[16px]" viewBox="0 0 16 16"><path d="M1 1h14v14H1z" fill="#2e62b8" /><path d="M4 1h8v5H4z" fill="#fff" /><path d="M4 9h8v6H4z" fill="#b8c8e4" /></svg>
            <span class="ml-[4px] text-[7px]">▼</span>
            <span class="ml-[5px] h-[18px] w-px bg-[#b8b8b8]"></span>
            <svg class="ml-[6px] h-[18px] w-[18px]"><use href="#round" /></svg>
            <svg class="ml-[5px] h-[18px] w-[18px]"><use href="#round" /></svg>
            <span class="ml-[33px] w-[40px] text-center text-[12px]">1 / 2</span>
            <svg class="ml-[33px] h-[18px] w-[18px]"><use href="#roundnext" /></svg>
            <svg class="ml-[5px] h-[18px] w-[18px]"><use href="#roundnext" /></svg>
            <span class="ml-[5px] h-[18px] w-px bg-[#b8b8b8]"></span>
            <svg class="ml-[5px] h-[18px] w-[18px] -scale-x-100"><use href="#lens" /></svg>
            <svg class="ml-[5px] h-[18px] w-[18px] -scale-x-100"><use href="#lens" /></svg>
            <svg class="ml-[4px] h-[16px] w-[18px]" viewBox="0 0 18 16"><path d="M1 2h16v12H1z" fill="#dfe8f4" stroke="#6f8ab0" /><path d="M3 5h5v6H3z" fill="#3b8" /><path d="M10 7h5v2h-5z" fill="#4a78b8" /></svg>
            <span class="ml-[3px] text-[7px]">▼</span>
            <span class="ml-[4px] h-[18px] w-px bg-[#b8b8b8]"></span>
            <svg class="ml-[4px] h-[18px] w-[18px]" viewBox="0 0 18 18"><path d="M5 2h8v5H5z" fill="#eee" stroke="#888" /><path d="M1 7h16v7H1z" fill="#a8a8a8" stroke="#666" /><path d="M4 12h10v4H4z" fill="#f4f4f4" stroke="#888" /></svg>
            <svg class="ml-[5px] h-[15px] w-[15px]" viewBox="0 0 15 15"><path d="M.5.500h14v14H.5z" fill="#ddd" stroke="#999" /><path d="M5 1v13M10 1v13M1 5h13M1 10h13" stroke="#999" /></svg>
            <svg class="ml-[6px] h-[18px] w-[16px]" viewBox="0 0 16 18"><path d="M1 2h6v7H1z" fill="#a8c4ea" stroke="#6f8ab0" /><path d="M5 9h8v8H5z" fill="#f4f4f4" stroke="#999" /><circle cx="9" cy="14" r="2.500" fill="#d24040" /><path d="M11 1v5l-2-2" stroke="#3a9a3a" fill="none" /></svg>
            <span class="ml-[4px] text-[7px]">▼</span>
            <svg class="ml-[116px] h-[14px] w-[18px]" viewBox="0 0 18 14"><path d="M1 6l8-5 8 5-6 6-3-3-3 3z" fill="#f2c32e" stroke="#5a4300" /><path d="M9 2v6" stroke="#5a4300" /></svg>
          </div>

          <!-- Dokument, rot markiert -->
          <div class="-ml-[3px] flex min-h-0 flex-1 border-[3px] border-[#f00000] bg-white">
            <div class="w-[5px] shrink-0 bg-[#909090]"></div>
            <div class="w-[5px] shrink-0 bg-[#e2e2e2]"></div>
            <div class="min-w-0 flex-1 pl-[93px] pt-[49px]">
              <div class="h-[26px] w-[222px] border-b-2 border-[#909090] font-['Liberation_Serif',serif] text-[20px] leading-[24px] font-bold tracking-[0.15px] whitespace-nowrap">Jurxpert und Partner</div>
              <div class="mt-[10px] text-[10.3px] leading-[14px] italic font-['DejaVu_Sans',sans-serif] text-[#222]">Rechtsanwälte GmbH</div>
              <div class="mt-[21px] font-['DejaVu_Sans',sans-serif] text-[#222]">
                <div class="text-[10.5px] leading-[13px]">Schweglerstraße 20/DG</div>
                <div class="text-[9.4px] leading-[11px]">A-1150 Wien</div>
                <div class="text-[9.4px] leading-[10.5px]">T +43 (1) 891 93 - 33740</div>
                <div class="text-[9.4px] leading-[10.5px]">F +43 (1) 891 93 - 33720</div>
                <div class="text-[9.4px] leading-[11px]">E&nbsp; Support@acp.at</div>
                <div class="text-[9.4px] leading-[11px]">www.jurXpert.at</div>
                <div class="mt-[12px] text-[10.5px] leading-[13px] font-bold text-black">Dr. Martin Jurxpert</div>
                <div class="text-[9px] leading-[12px] italic">Wirtschaftsrecht</div>
                <div class="mt-[12px] text-[10.5px] leading-[13px] font-bold text-black">Dr. Thomas Federführer</div>
                <div class="text-[9px] leading-[12px] italic">Wirtschaftsrecht</div>
                <div class="mt-[12px] text-[10.5px] leading-[13px] font-bold text-black">Dr. Michael Rechtsanwalt</div>
                <div class="text-[9px] leading-[12px] italic">Familienrecht</div>
                <div class="mt-[11px] text-[10.5px] leading-[13px] font-bold text-black">Dr. Stefan Kodex</div>
                <div class="text-[9px] leading-[12px] italic">Arbeitsrecht</div>
                <div class="mt-[7px] ml-[511px] text-[12px] leading-[14px] italic">Xpert-BK.doc</div>
              </div>
            </div>
            <div class="flex w-[15px] shrink-0 flex-col items-center bg-[#f4f4f4] mr-[4px]">
              <svg class="mt-[8px] h-[8px] w-[10px]" viewBox="0 0 10 8"><path d="M1 6.500l4-4 4 4" fill="none" stroke="#555" stroke-width="2" /></svg>
              <div class="mt-[3px] h-[22px] w-full bg-[#cdcdcd]"></div>
              <svg class="mt-auto mb-[4px] h-[8px] w-[10px]" viewBox="0 0 10 8"><path d="M1 1.500l4 4 4-4" fill="none" stroke="#555" stroke-width="2" /></svg>
            </div>
          </div>
        </div>

        <!-- Icon-Leiste -->
        <div class="ml-[19px] w-[4px] shrink-0 bg-[#8a8f99]"></div>
        <div class="flex w-[75px] shrink-0 flex-col items-center bg-[#6d7a99] pt-[615px] pb-[2px] mb-[2px]">
          <svg class="h-[30px] w-[28px]" viewBox="0 0 28 30">
            <path d="M7 2l19-2-2 28-17 1C3 26 3 24 4 22z" fill="#dfe1e4" stroke="#9aa" />
            <path d="M11 3l13-1-1 6-12 1z" fill="#6ab0e8" />
            <g fill="#d8222c"><rect x="11" y="11" width="3" height="2" /><rect x="15" y="11" width="3" height="2" /><rect x="19" y="11" width="3" height="2" /><rect x="11" y="15" width="3" height="2" /><rect x="15" y="15" width="3" height="2" /><rect x="19" y="15" width="3" height="2" /><rect x="10" y="19" width="3" height="2" /><rect x="14" y="19" width="3" height="2" /><rect x="18" y="19" width="3" height="2" /><rect x="10" y="23" width="3" height="2" /><rect x="14" y="23" width="3" height="2" /><rect x="18" y="23" width="3" height="2" /></g>
          </svg>
          <svg class="mt-[10px] h-[31px] w-[28px]" viewBox="0 0 28 31"><path d="M1 2h26L16 18v12h-3V18z" fill="url(#gSilver)" stroke="#a9afb8" stroke-width=".7" /><ellipse cx="14" cy="3" rx="13" ry="2.500" fill="#5c6272" stroke="#ddd" /></svg>
          <svg class="mt-[13px] ml-[2px] h-[23px] w-[20px]" viewBox="0 0 20 23"><path d="M1 1h10l5 4v17H1z" fill="#f4f6fa" stroke="#d8dce4" stroke-width=".7" /><path d="M19 3v14l-4-4-3 3-4-4 3-3-4-4z" fill="#1f94d8" stroke="#0f6ea8" stroke-width=".6" /></svg>
          <svg class="mt-[18px] h-[30px] w-[30px]" viewBox="0 0 30 30"><path d="M7 1h16v10H7z" fill="#f6f6f6" /><path d="M1 10h28v11H1z" fill="url(#gSilver)" stroke="#d0d0d0" stroke-width=".5" /><path d="M5 13h20v4H5z" fill="#55585e" /><path d="M5 21h20l2 8H3z" fill="#fafafa" /></svg>
          <svg class="mt-[17px] h-[32px] w-[32px]" viewBox="0 0 32 32"><path d="M6 7h24v24H6z" fill="#f4f6fb" stroke="#3a5ca8" /><path d="M9 12h18M9 16h18M9 20h18M9 24h18" stroke="#b8c4de" /><path d="M2 1l3-1 20 23-2 3-2-.500z" fill="#f2c22c" stroke="#8a6a10" stroke-width=".6" /><path d="M1 .500l3.500-.500 1.500 2-3 2z" fill="#f08a40" /></svg>
          <svg class="mt-[7px] h-[32px] w-[32px]" viewBox="0 0 32 32"><path d="M11 1h10v10h10v10H21v10H11V21H1V11h10z" fill="url(#gGreen)" stroke="#33524a" stroke-width="1.200" /></svg>
          <svg class="mt-[14px] h-[32px] w-[28px]" viewBox="0 0 28 32">
            <path d="M14 .5L5 6l9 7V9c5 0 8 2 9 8h4.500C27 9 21 4 14 4z" fill="#f9a93a" stroke="#c4620f" stroke-width=".8" />
            <path d="M14 31.500l9-5.500-9-7v4c-5 0-8-2-9-8H.5c.5 8 6.500 13 13.500 13z" fill="#f9a93a" stroke="#c4620f" stroke-width=".8" />
          </svg>
          <svg class="mt-[9px] h-[30px] w-[30px]" viewBox="0 0 30 30"><path d="M1 6l5-5 9 9 9-9 5 5-9 9 9 9-5 5-9-9-9 9-5-5 9-9z" fill="url(#gRed)" stroke="#7a1016" stroke-width=".6" /></svg>
        </div>
      </div>

      <!-- Statusleiste -->
      <div class="mt-[1px] ml-[3px] mr-[2px] h-[15px] shrink-0 bg-[#063a5e]"></div>

      <!-- Kontextmenue -->
      <div class="absolute top-[362px] left-[985px] h-[194px] w-[288px] border border-[#a8a8a8] bg-white p-[1px] shadow-[3px_3px_4px_rgba(0,0,0,0.45)]">
        <div class="absolute top-[1px] bottom-[1px] left-[1px] w-[26px] bg-[#d4d0c8]"></div>
        <div class="relative leading-[21px] whitespace-nowrap">
          <div class="flex h-[21px] justify-between pr-[17px] pl-[30px]"><span><u>D</u>okument(e) öffnen</span><span>B</span></div>
          <div class="flex h-[21px] pl-[30px]"><span>D<u>o</u>kument(e) drucken</span></div>
          <div class="flex h-[21px] pl-[30px]"><span>Do<u>k</u>ument(e) konvertieren...</span></div>
          <div class="flex h-[21px] pl-[30px]"><span>Dok<u>u</u>ment(e) mittels Email senden</span></div>
          <div class="flex h-[21px] w-[284px] items-center justify-between bg-[#474a9f] pr-[3px] pl-[30px] text-white"><span>Doku<u>m</u>entvorschau...</span><span class="text-[8px]">▶</span></div>
          <div class="flex h-[21px] justify-between pr-[17px] pl-[30px]"><span>N<u>a</u>ch Art gruppieren</span><span>Strg+G</span></div>
          <div class="flex h-[21px] justify-between pr-[17px] pl-[30px]"><span><u>N</u>eue Leistung...</span><span>N</span></div>
          <div class="flex h-[21px] justify-between pr-[17px] pl-[30px]"><span>N<u>e</u>ue Frist...</span><span>Alt+N</span></div>
          <div class="flex h-[21px] pl-[30px]"><span>Dokumen<u>t</u> löschen</span></div>
        </div>
      </div>
      <div class="absolute top-[446px] left-[1269px] h-[67px] w-[183px] border border-[#a8a8a8] bg-white p-[1px] shadow-[3px_3px_4px_rgba(0,0,0,0.45)]">
        <div class="absolute top-[1px] bottom-[1px] left-[1px] w-[26px] bg-[#d4d0c8]"></div>
        <div class="relative leading-[21px] whitespace-nowrap">
          <div class="flex h-[21px] w-[178px] items-center bg-[#474a9f] pl-[5px] text-white">
            <svg class="h-[12px] w-[16px]" viewBox="0 0 16 12"><path d="M1.500 6l4 4 9-8" fill="none" stroke="#31c43a" stroke-width="2.600" /></svg>
            <span class="ml-[9px]"><u>u</u>nten verankern</span>
          </div>
          <div class="h-[21px] pl-[30px]"><u>r</u>echts verankern</div>
          <div class="flex h-[21px] justify-between pr-[17px] pl-[30px]"><span><u>e</u>ntkoppelt</span><span>Alt+D</span></div>
        </div>
      </div>

      <!-- rote Pfeile -->
      <svg class="pointer-events-none absolute top-0 left-0 h-[1007px] w-[1679px]" viewBox="0 0 1679 1007">
        <path d="M869 367L996 450" stroke="#e80000" stroke-width="3" />
        <path d="M1007 458L990 455 999 443z" fill="#e80000" />
        <path d="M1172 462H1253" stroke="#e80000" stroke-width="3" />
        <path d="M1266 462L1250 456V468z" fill="#e80000" />
      </svg>
    </div>
  </body>
</html>
